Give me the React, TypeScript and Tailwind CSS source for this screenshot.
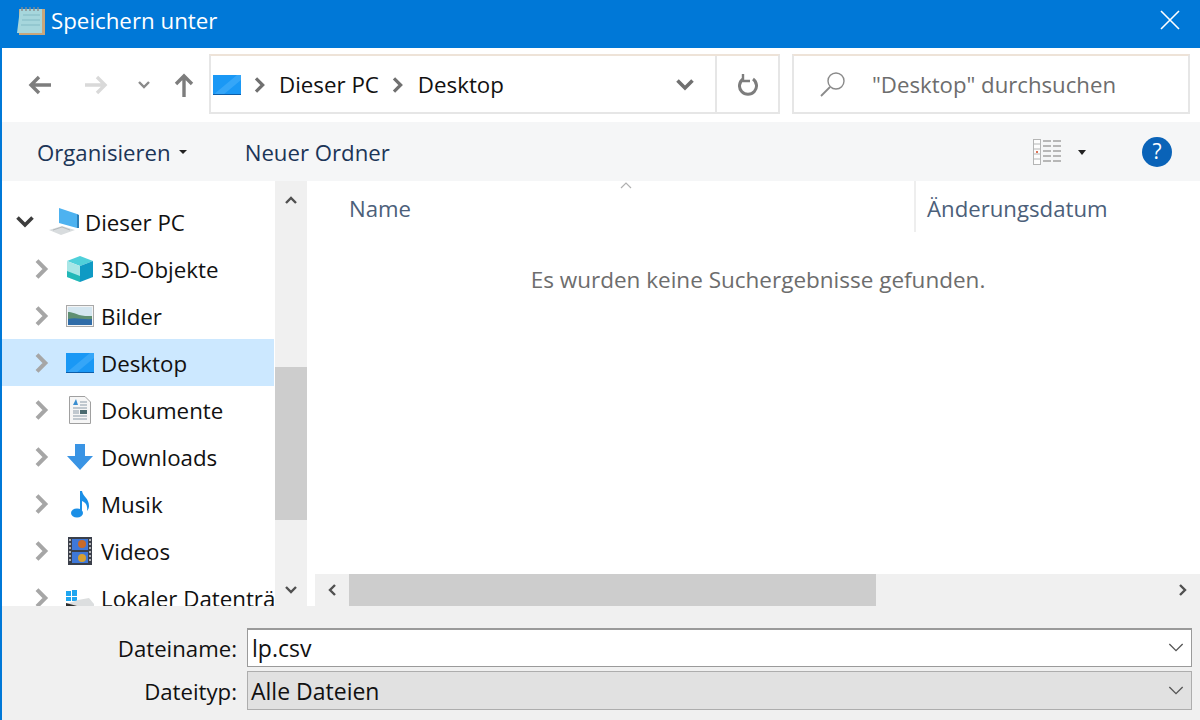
import { ReactNode } from "react"

function Chev({ dir, className }: { dir: "right" | "down" | "up" | "left"; className: string }) {
  const d = {
    right: "M3 1 L8 6 L3 11",
    left: "M9 1 L4 6 L9 11",
    down: "M1 3 L6 8 L11 3",
    up: "M1 9 L6 4 L11 9",
  }[dir]
  return (
    <svg viewBox="0 0 12 12" className={className} fill="none" stroke="currentColor" strokeWidth="2.4">
      <path d={d} />
    </svg>
  )
}

function DesktopIcon({ className }: { className: string }) {
  return (
    <svg viewBox="0 0 28 20" className={className}>
      <rect width="28" height="20" fill="#1a98f5" />
      <path d="M0 20 L10 20 L28 5 L28 0 L24 0 Z" fill="#35a6f8" />
      <rect y="19" width="28" height="1" fill="#0c5da8" />
    </svg>
  )
}

function PcIcon() {
  return (
    <svg viewBox="0 0 32 28" className="w-8 h-7 shrink-0">
      <path d="M11 0 L29 6 L29 20 L11 15 Z" fill="#4db2f0" />
      <path d="M29 6 L31 7 L31 20 L29 20 Z" fill="#2d7fb8" />
      <path d="M1 22 L14 18 L27 22 L13 27 Z" fill="#d8dcde" />
      <path d="M5 22 L14 19 L22 22" stroke="#b5babd" fill="none" />
    </svg>
  )
}

function CubeIcon() {
  return (
    <svg viewBox="0 0 28 28" className="w-7 h-7 shrink-0">
      <path d="M14 1 L27 6 L14 11 L1 6 Z" fill="#4fd0da" />
      <path d="M1 6 L14 11 L14 27 L1 22 Z" fill="#a8e6e6" />
      <path d="M14 11 L27 6 L27 22 L14 27 Z" fill="#0f9ac4" />
      <path d="M1 16 L14 21 L14 27 L1 22 Z" fill="#22b8b8" />
    </svg>
  )
}

function PictureIcon() {
  return (
    <svg viewBox="0 0 28 22" className="w-7 h-[22px] shrink-0">
      <rect x="0.5" y="0.5" width="27" height="21" fill="#f4f4f4" stroke="#a9a9a9" />
      <rect x="2" y="2" width="24" height="18" fill="#d4e6f0" />
      <path d="M2 7 C7 6 12 12 26 11 L26 16 L2 16 Z" fill="#5f8f72" />
      <path d="M2 14 C10 12 18 15 26 14 L26 20 L2 20 Z" fill="#2f6ca8" />
    </svg>
  )
}

function DocIcon() {
  return (
    <svg viewBox="0 0 22 28" className="w-[22px] h-7 shrink-0">
      <path d="M0.5 0.5 L16 0.5 L21.5 6 L21.5 27.5 L0.5 27.5 Z" fill="#f6f6f6" stroke="#a0a0a0" />
      <path d="M4 9 L7 3 L9 9 Z" fill="#3b8ed0" />
      <path d="M11 6 H18 M11 9 H18 M4 12 H18 M4 20 H18 M4 23 H18" stroke="#8a9aa8" strokeWidth="1.2" />
      <rect x="11" y="14" width="7" height="4" fill="#4a6a70" />
      <path d="M4 15 H10 M4 17 H10" stroke="#8a9aa8" strokeWidth="1.2" />
    </svg>
  )
}

function DownloadIcon() {
  return (
    <svg viewBox="0 0 26 26" className="w-[26px] h-[26px] shrink-0">
      <path d="M8 0 H18 V12 H26 L13 26 L0 12 H8 Z" fill="#3a94e4" />
    </svg>
  )
}

function MusicIcon() {
  return (
    <svg viewBox="0 0 20 28" className="w-5 h-7 shrink-0">
      <ellipse cx="7" cy="23" rx="6" ry="4.5" fill="#1b8fe6" />
      <path d="M10 1 H12 C13 7 19 8 19 16 C19 18 18 20 17 21 C18 15 15 12 12 11 L12 23 H10 Z" fill="#1b8fe6" />
    </svg>
  )
}

function VideoIcon() {
  return (
    <svg viewBox="0 0 24 28" className="w-6 h-7 shrink-0">
      <rect width="24" height="28" fill="#3a3f4a" />
      <rect x="4" y="2" width="16" height="11" fill="#3f78d8" />
      <rect x="4" y="15" width="16" height="11" fill="#3f78d8" />
      <circle cx="14" cy="7" r="4" fill="#c96a28" />
      <circle cx="14" cy="21" r="4" fill="#d8a030" />
      <path d="M1 3 H3 M1 7 H3 M1 11 H3 M1 15 H3 M1 19 H3 M1 23 H3 M21 3 H23 M21 7 H23 M21 11 H23 M21 15 H23 M21 19 H23 M21 23 H23" stroke="#d8d8d8" strokeWidth="1.6" />
    </svg>
  )
}

function DriveIcon() {
  return (
    <svg viewBox="0 0 28 26" className="w-7 h-[26px] shrink-0">
      <rect x="0" y="6" width="5" height="5" fill="#1fa6f0" />
      <rect x="6" y="5" width="5" height="6" fill="#1fa6f0" />
      <rect x="0" y="12" width="5" height="4" fill="#1fa6f0" />
      <rect x="6" y="12" width="5" height="4" fill="#1fa6f0" />
      <path d="M12 15 L23 13 L28 19 L28 26 L0 26 L0 19 Z" fill="#dcdedf" />
      <path d="M0 18 L11 21 L14 26 L0 26 Z" fill="#2c2c2c" />
    </svg>
  )
}

function NavRow({
  label,
  icon,
  selected,
  open,
}: {
  label: string
  icon: ReactNode
  selected?: boolean
  open?: boolean
}) {
  return (
    <div className={`flex items-center h-[47px] shrink-0 w-[272px] ${selected ? "bg-[#cce8ff]" : ""}`}>
      {open ? (
        <>
          <div className="w-[46px] pl-[13px] flex shrink-0">
            <Chev dir="down" className="w-[20px] h-[18px] text-[#3d3d3d]" />
          </div>
          <div className="w-[37px] flex shrink-0">{icon}</div>
        </>
      ) : (
        <>
          <div className="w-[60px] pl-[30px] flex shrink-0">
            <Chev dir="right" className="w-5 h-5 text-[#a6a6a6]" />
          </div>
          <div className="w-[36px] flex justify-center shrink-0 mr-[3px]">{icon}</div>
        </>
      )}
      <span className="text-[22.3px] whitespace-nowrap text-[#111] pt-[2px]">{label}</span>
    </div>
  )
}

export default function App() {
  return (
    <div
      className="w-[1200px] h-[720px] overflow-hidden flex flex-col bg-white border-l-2 border-[#0078d7] text-[#111]"
      style={{ fontFamily: '"Open Sans", "Noto Sans", sans-serif' }}
    >
      <div className="h-[48px] -ml-[2px] shrink-0 bg-[#0078d7] flex items-center pl-[16px] pr-[20px] pb-[6px] text-white">
        <svg viewBox="0 0 30 30" className="w-[30px] h-[30px]">
          <rect x="3" y="3" width="26" height="26" fill="#c9a67a" />
          <path d="M4 3 H26 L26 27 L1 27 Z" fill="#a6d6dc" />
          <path d="M7 9 H24 M6 14 H24 M5 19 H24" stroke="#8fc3cc" strokeWidth="1.5" />
          <path d="M6 1 V5 M10 1 V5 M14 1 V5 M18 1 V5 M22 1 V5" stroke="#8a8a8a" strokeWidth="1.4" />
        </svg>
        <span className="text-[22.3px] ml-[5px] flex-1">Speichern unter</span>
        <svg viewBox="0 0 20 20" className="w-[20px] h-[20px] mb-[2px]" stroke="white" strokeWidth="1.6">
          <path d="M1 1 L19 19 M19 1 L1 19" />
        </svg>
      </div>

      <div className="h-[74px] shrink-0 flex items-center pr-[10px] pb-[3px]">
        <div className="w-[207px] flex items-center pl-[26px] pt-[2px] shrink-0">
          <svg viewBox="0 0 24 20" className="w-[24px] h-[20px]" fill="none" stroke="#7d7d7d" strokeWidth="3.4">
            <path d="M23 10 H3 M11 2 L3 10 L11 18" />
          </svg>
          <svg viewBox="0 0 24 20" className="w-[24px] h-[20px] ml-[32px]" fill="none" stroke="#d9d9d9" strokeWidth="3.4">
            <path d="M1 10 H21 M13 2 L21 10 L13 18" />
          </svg>
          <Chev dir="down" className="w-[12px] h-[12px] ml-[30px] text-[#8a8a8a]" />
          <svg viewBox="0 0 20 24" className="w-[20px] h-[24px] ml-[24px]" fill="none" stroke="#7d7d7d" strokeWidth="3.4">
            <path d="M10 24 V3 M2 11 L10 3 L18 11" />
          </svg>
        </div>
        <div className="w-[571px] h-[60px] shrink-0 border-2 border-[#e6e6e6] border-t-[#eee3d8] flex items-center">
          <DesktopIcon className="w-[28px] h-[20px] ml-[2px] mt-[2px]" />
          <Chev dir="right" className="w-[16px] h-[16px] ml-[11px] mt-[2px] text-[#707070]" />
          <span className="text-[22.3px] ml-[11px] pt-[3px]">Dieser PC</span>
          <Chev dir="right" className="w-[16px] h-[16px] ml-[11px] mt-[2px] text-[#707070]" />
          <span className="text-[22.3px] ml-[12px] pt-[3px] flex-1">Desktop</span>
          <Chev dir="down" className="w-[18px] h-[18px] mr-[21px] mt-[2px] text-[#707070]" />
          <div className="w-[63px] h-full border-l-2 border-[#e6e6e6] flex items-center justify-center pl-[3px] pt-[2px]">
            <svg viewBox="0 0 22 24" className="w-[22px] h-[24px]" fill="none" stroke="#7d7d7d" strokeWidth="3">
              <path d="M15 6 A8.5 8.5 0 1 1 5 6" />
              <path d="M5 1 V8 H12" strokeWidth="2.4" />
            </svg>
          </div>
        </div>
        <div className="w-[398px] h-[60px] ml-[12px] shrink-0 border-2 border-[#e6e6e6] border-t-[#eee3d8] flex items-center">
          <svg viewBox="0 0 26 26" className="w-[26px] h-[26px] ml-[26px]" fill="none" stroke="#8a8a8a" strokeWidth="1.4">
            <circle cx="16" cy="10" r="8" />
            <path d="M10 16 L1 25" strokeWidth="1.8" />
          </svg>
          <span className="text-[22.2px] text-[#6d6d6d] ml-[26px] pt-[3px]">"Desktop" durchsuchen</span>
        </div>
      </div>

      <div className="h-[59px] shrink-0 bg-[#f5f6f7] flex items-center pl-[35px] pr-[28px] pt-[1px] text-[#1c3557]">
        <span className="text-[22.2px] pt-[2px]">Organisieren</span>
        <div className="ml-[8px] w-0 h-0 border-x-[4px] border-x-transparent border-t-[4px] border-t-[#222]" />
        <span className="text-[22.2px] ml-[58px] pt-[2px] flex-1">Neuer Ordner</span>
        <svg viewBox="0 0 28 26" className="w-[28px] h-[26px] opacity-80">
          <rect x="0.5" y="0.5" width="7" height="25" fill="#fff" stroke="#a5a5a5" />
          <path d="M1 5 H7 M1 10 H7 M1 15 H7 M1 20 H7" stroke="#a5a5a5" />
          <rect x="3" y="12" width="2" height="2" fill="#d8502c" />
          <path d="M10 2 H18 M20 2 H28 M10 7 H18 M20 7 H28 M10 12 H18 M20 12 H28 M10 17 H18 M20 17 H28 M10 22 H18 M20 22 H28" stroke="#8f8f8f" strokeWidth="1.5" />
        </svg>
        <div className="ml-[17px] w-0 h-0 border-x-[4px] border-x-transparent border-t-[5px] border-t-[#222]" />
        <div className="ml-[56px] w-[30px] h-[30px] rounded-full bg-[#0a63b8] text-white flex items-center justify-center text-[21px]">
          ?
        </div>
      </div>

      <div className="flex-1 min-h-0 flex">
        <div className="w-[273px] shrink-0 overflow-hidden pt-[17px] flex flex-col">
          <NavRow label="Dieser PC" icon={<PcIcon />} open />
          <NavRow label="3D-Objekte" icon={<CubeIcon />} />
          <NavRow label="Bilder" icon={<PictureIcon />} />
          <NavRow label="Desktop" icon={<DesktopIcon className="w-[28px] h-[20px] shrink-0" />} selected />
          <NavRow label="Dokumente" icon={<DocIcon />} />
          <NavRow label="Downloads" icon={<DownloadIcon />} />
          <NavRow label="Musik" icon={<MusicIcon />} />
          <NavRow label="Videos" icon={<VideoIcon />} />
          <NavRow label="Lokaler Datenträger" icon={<DriveIcon />} />
        </div>
        <div className="w-[32px] shrink-0 bg-[#f0f0f0] flex flex-col">
          <div className="h-[186px] flex justify-center pt-[13px]">
            <Chev dir="up" className="w-[12px] h-[12px] text-[#505050]" />
          </div>
          <div className="h-[153px] bg-[#cdcdcd]" />
          <div className="flex-1 flex justify-center items-end pb-[10px]">
            <Chev dir="down" className="w-[12px] h-[12px] text-[#505050]" />
          </div>
        </div>
        <div className="flex-1 min-w-0 ml-[8px] flex flex-col">
          <div className="h-[51px] shrink-0 flex relative">
            <Chev dir="up" className="absolute left-[303px] top-[-2px] w-[16px] h-[12px] text-[#b0b0b0] [&>path]:[stroke-width:1.2]" />
            <div className="w-[601px] pl-[34px] pt-[11px] text-[22.2px] text-[#4c607a] border-r-2 border-[#eeeeee]">Name</div>
            <div className="pl-[11px] pt-[11px] text-[22.2px] text-[#4c607a]">Änderungsdatum</div>
          </div>
          <div className="flex-1 min-h-0 text-center text-[22.5px] text-[#6d6d6d] pt-[31px] pl-[1px]">
            Es wurden keine Suchergebnisse gefunden.
          </div>
          <div className="h-[32px] shrink-0 bg-[#f0f0f0] flex items-center">
            <div className="w-[34px] flex justify-center">
              <Chev dir="left" className="w-[12px] h-[12px] text-[#505050]" />
            </div>
            <div className="w-[527px] h-full bg-[#cdcdcd]" />
            <div className="flex-1" />
            <div className="w-[34px] flex justify-center">
              <Chev dir="right" className="w-[12px] h-[12px] text-[#505050]" />
            </div>
          </div>
        </div>
      </div>

      <div className="h-[114px] shrink-0 bg-[#f0f0f0] pt-[22px] pr-[8px] flex flex-col gap-[4px]">
        <div className="flex items-center">
          <label className="w-[245px] pr-[10px] pt-[2px] text-right text-[22.2px]">Dateiname:</label>
          <div className="flex-1 h-[39px] bg-white border border-[#9a9a9a] border-t-2 flex items-center pl-[4px] pr-[7px] text-[23px]">
            <span className="flex-1 pt-[1px]">lp.csv</span>
            <Chev dir="down" className="w-[16px] h-[16px] text-[#555] [&>path]:[stroke-width:1]" />
          </div>
        </div>
        <div className="flex items-center">
          <label className="w-[245px] pr-[10px] pt-[2px] text-right text-[22.2px]">Dateityp:</label>
          <div className="flex-1 h-[39px] bg-[#e1e1e1] border border-[#adadad] flex items-center pl-[3px] pr-[7px] text-[23px]">
            <span className="flex-1 pt-[2px]">Alle Dateien</span>
            <Chev dir="down" className="w-[16px] h-[16px] text-[#555] [&>path]:[stroke-width:1]" />
          </div>
        </div>
      </div>
    </div>
  )
}
